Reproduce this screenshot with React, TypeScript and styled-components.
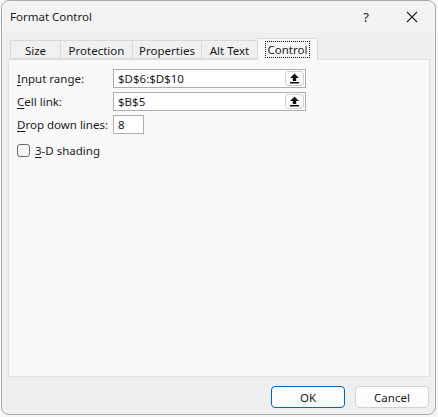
import * as React from 'react'
import styled, { createGlobalStyle } from 'styled-components'

const Global = createGlobalStyle`
    html, body {
        margin: 0;
        padding: 0;
        background: #f7f7f7;
        font-family: 'Noto Sans', 'Segoe UI', sans-serif;
        font-size: 11px;
        color: #1a1a1a;
    }
`

const Window = styled.div`
    box-sizing: border-box;
    margin: 0 0 0 1px;
    width: 435px;
    height: 415px;
    background: #efefef;
    border: 1px solid #a9a9a9;
    border-radius: 8px;
    display: flex;
    flex-direction: column;
    overflow: hidden;
`

const TitleBar = styled.div`
    height: 31px;
    display: flex;
    align-items: center;
    padding-left: 8px;
    background: #f3f3f3;
`

const Title = styled.div`
    flex: 1;
    font-size: 11.5px;
`

const TitleButton = styled.div`
    width: 46px;
    height: 31px;
    display: flex;
    align-items: center;
    justify-content: center;
    font-size: 13px;
    color: #222;
`

const Body = styled.div`
    flex: 1;
    display: flex;
    flex-direction: column;
    padding: 6px 6px 0 6px;
`

const TabStrip = styled.div`
    display: flex;
    align-items: flex-end;
    height: 21px;
    padding-left: 2px;
    position: relative;
    z-index: 1;
`

const Tab = styled.div<{ $active?: boolean; $w: number }>`
    box-sizing: border-box;
    width: ${p => p.$w}px;
    height: ${p => (p.$active ? 22 : 19)}px;
    margin-bottom: ${p => (p.$active ? -1 : 0)}px;
    margin-left: ${p => (p.$active ? -1 : 0)}px;
    margin-right: ${p => (p.$active ? -1 : 0)}px;
    display: flex;
    align-items: center;
    justify-content: center;
    background: ${p => (p.$active ? '#f9f9f9' : '#f0f0f0')};
    border: 1px solid #dadada;
    border-bottom: ${p => (p.$active ? 'none' : '1px solid #dadada')};
    border-left: ${p => (p.$active ? '1px solid #dadada' : 'none')};
    font-size: 11.5px;
    padding-top: ${p => (p.$active ? 0 : 1)}px;
    &:first-child {
        border-left: 1px solid #dadada;
    }
`

const FocusLabel = styled.span`
    outline: 1px dotted #111;
    padding: 0 2px;
    line-height: 15px;
`

const Panel = styled.div`
    box-sizing: border-box;
    height: 318px;
    width: 422px;
    background: #f9f9f9;
    border: 1px solid #e0e0e0;
    padding: 9px 8px;
    display: flex;
    flex-direction: column;
`

const FormGrid = styled.div`
    display: grid;
    grid-template-columns: 96px auto;
    row-gap: 4px;
    align-items: center;
    justify-items: start;
`

const Label = styled.label`
    font-size: 11.5px;
    line-height: 19px;
    white-space: nowrap;
`

const Key = styled.span`
    text-decoration: underline;
    text-underline-offset: 2px;
`

const RefInput = styled.div<{ $w: number }>`
    box-sizing: border-box;
    width: ${p => p.$w}px;
    height: 19px;
    background: #ffffff;
    border: 1px solid #adadad;
    display: flex;
    align-items: center;
    padding: 0 1px 0 4px;
    font-size: 11.5px;
`

const RefText = styled.span`
    flex: 1;
`

const CollapseButton = styled.div`
    box-sizing: border-box;
    width: 19px;
    height: 15px;
    border: 1px solid #d0d0d0;
    border-radius: 3px;
    background: #fdfdfd;
    display: flex;
    align-items: center;
    justify-content: center;
`

const CheckRow = styled.div`
    display: flex;
    align-items: center;
    gap: 5px;
    margin-top: 9px;
    font-size: 11.5px;
`

const CheckBox = styled.div`
    box-sizing: border-box;
    width: 13px;
    height: 13px;
    border: 1px solid #6b6b6b;
    border-radius: 3px;
    background: #f6f6f6;
`

const Footer = styled.div`
    display: flex;
    justify-content: flex-end;
    gap: 10px;
    padding: 9px 0 0 0;
`

const Button = styled.div<{ $primary?: boolean }>`
    box-sizing: border-box;
    width: 74px;
    height: 22px;
    display: flex;
    align-items: center;
    justify-content: center;
    background: #fdfdfd;
    border: 1px solid ${p => (p.$primary ? '#0067c0' : '#d0d0d0')};
    border-radius: 4px;
    font-size: 11.5px;
`

const UpArrow = () => (
    <svg width="11" height="11" viewBox="0 0 11 11">
        <path d="M5.5 0.5 L10 5 L7.2 5 L7.2 8 L3.8 8 L3.8 5 L1 5 Z" fill="#111" />
        <rect x="1" y="9" width="9" height="1.5" fill="#111" />
    </svg>
)

const CloseIcon = () => (
    <svg width="12" height="12" viewBox="0 0 12 12">
        <path d="M1 1 L11 11 M11 1 L1 11" stroke="#222" strokeWidth="1.1" />
    </svg>
)

const tabs = [
    { label: 'Size', w: 51 },
    { label: 'Protection', w: 72 },
    { label: 'Properties', w: 69 },
    { label: 'Alt Text', w: 56 },
]

export default function App() {
    return (
        <>
            <Global />
            <Window>
                <TitleBar>
                    <Title>Format Control</Title>
                    <TitleButton>?</TitleButton>
                    <TitleButton>
                        <CloseIcon />
                    </TitleButton>
                </TitleBar>
                <Body>
                    <TabStrip>
                        {tabs.map(t => (
                            <Tab key={t.label} $w={t.w}>
                                {t.label}
                            </Tab>
                        ))}
                        <Tab $active $w={61}>
                            <FocusLabel>Control</FocusLabel>
                        </Tab>
                    </TabStrip>
                    <Panel>
                        <FormGrid>
                            <Label>
                                <Key>I</Key>nput range:
                            </Label>
                            <RefInput $w={193}>
                                <RefText>$D$6:$D$10</RefText>
                                <CollapseButton>
                                    <UpArrow />
                                </CollapseButton>
                            </RefInput>
                            <Label>
                                <Key>C</Key>ell link:
                            </Label>
                            <RefInput $w={193}>
                                <RefText>$B$5</RefText>
                                <CollapseButton>
                                    <UpArrow />
                                </CollapseButton>
                            </RefInput>
                            <Label>
                                <Key>D</Key>rop down lines:
                            </Label>
                            <RefInput $w={31}>
                                <RefText>8</RefText>
                            </RefInput>
                        </FormGrid>
                        <CheckRow>
                            <CheckBox />
                            <span>
                                <Key>3</Key>-D shading
                            </span>
                        </CheckRow>
                    </Panel>
                    <Footer>
                        <Button $primary>OK</Button>
                        <Button>Cancel</Button>
                    </Footer>
                </Body>
            </Window>
        </>
    )
}
